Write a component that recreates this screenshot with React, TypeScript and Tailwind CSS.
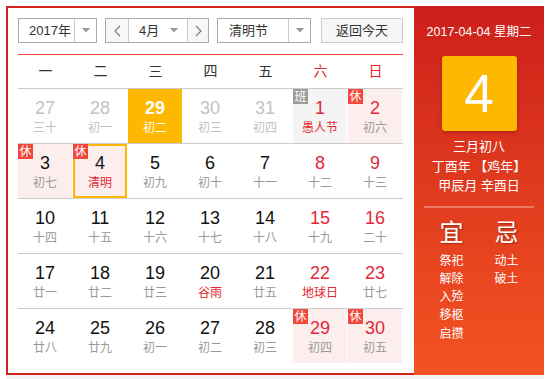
import * as React from "react";

type Day = {
  n: number;
  lunar: string;
  prev?: boolean;
  weekend?: boolean;
  fest?: boolean;
  badge?: "休" | "班";
  today?: boolean;
  selected?: boolean;
};

const WEEK = ["一", "二", "三", "四", "五", "六", "日"];

const ROWS: Day[][] = [
  [
    { n: 27, lunar: "三十", prev: true },
    { n: 28, lunar: "初一", prev: true },
    { n: 29, lunar: "初二", prev: true, today: true },
    { n: 30, lunar: "初三", prev: true },
    { n: 31, lunar: "初四", prev: true },
    { n: 1, lunar: "愚人节", weekend: true, fest: true, badge: "班" },
    { n: 2, lunar: "初六", weekend: true, badge: "休" },
  ],
  [
    { n: 3, lunar: "初七", badge: "休" },
    { n: 4, lunar: "清明", fest: true, badge: "休", selected: true },
    { n: 5, lunar: "初九" },
    { n: 6, lunar: "初十" },
    { n: 7, lunar: "十一" },
    { n: 8, lunar: "十二", weekend: true },
    { n: 9, lunar: "十三", weekend: true },
  ],
  [
    { n: 10, lunar: "十四" },
    { n: 11, lunar: "十五" },
    { n: 12, lunar: "十六" },
    { n: 13, lunar: "十七" },
    { n: 14, lunar: "十八" },
    { n: 15, lunar: "十九", weekend: true },
    { n: 16, lunar: "二十", weekend: true },
  ],
  [
    { n: 17, lunar: "廿一" },
    { n: 18, lunar: "廿二" },
    { n: 19, lunar: "廿三" },
    { n: 20, lunar: "谷雨", fest: true },
    { n: 21, lunar: "廿五" },
    { n: 22, lunar: "地球日", weekend: true, fest: true },
    { n: 23, lunar: "廿七", weekend: true },
  ],
  [
    { n: 24, lunar: "廿八" },
    { n: 25, lunar: "廿九" },
    { n: 26, lunar: "初一" },
    { n: 27, lunar: "初二" },
    { n: 28, lunar: "初三" },
    { n: 29, lunar: "初四", weekend: true, badge: "休" },
    { n: 30, lunar: "初五", weekend: true, badge: "休" },
  ],
];

const YI = ["祭祀", "解除", "入殓", "移柩", "启攒"];
const JI = ["动土", "破土"];

function Caret() {
  return (
    <svg width="8" height="5" viewBox="0 0 8 5" className="shrink-0">
      <path d="M0 0 L8 0 L4 4.5 Z" fill="#999" />
    </svg>
  );
}

function Chevron({ dir }: { dir: "left" | "right" }) {
  return (
    <svg width="7" height="12" viewBox="0 0 7 12">
      <path
        d={dir === "left" ? "M6 1 L1 6 L6 11" : "M1 1 L6 6 L1 11"}
        fill="none"
        stroke="#777"
        strokeWidth="1.1"
      />
    </svg>
  );
}

function Cell({ d }: { d: Day }) {
  const pink = d.badge === "休";
  const gray = d.badge === "班";
  let bg = "bg-white";
  if (d.today) bg = "bg-[#ffb800]";
  else if (pink) bg = "bg-[#fdeeee]";
  else if (gray) bg = "bg-[#f4f4f4]";

  let numColor = "text-[#111]";
  if (d.today) numColor = "text-white font-bold";
  else if (d.prev) numColor = "text-[#c2c2c2]";
  else if (d.weekend) numColor = "text-[#e3283a]";

  let lunarColor = "text-[#999]";
  if (d.today) lunarColor = "text-white";
  else if (d.prev) lunarColor = "text-[#c2c2c2]";
  else if (d.fest) lunarColor = "text-[#e3282d]";

  return (
    <div
      className={`relative flex h-[54px] w-[54px] flex-col items-center pt-[9px] ${bg} ${
        d.selected ? "ring-2 ring-inset ring-[#ffb800]" : ""
      }`}
    >
      {d.badge && (
        <span
          className={`absolute left-0 top-0 flex h-[15px] w-[15px] items-center justify-center text-[12px] leading-none text-white ${
            d.badge === "休" ? "bg-[#f3473c]" : "bg-[#9b9b9b]"
          }`}
        >
          {d.badge}
        </span>
      )}
      <span className={`text-[18px] leading-[20px] ${numColor}`}>{d.n}</span>
      <span className={`mt-[2px] text-[12px] leading-[16px] ${lunarColor}`}>{d.lunar}</span>
    </div>
  );
}

export default function App() {
  return (
    <div className="bg-white font-['Liberation_Sans','Noto_Sans_CJK_SC',sans-serif]">
      <div className="ml-[6px] flex h-[375px] w-[538px] flex-col pt-[6px]">
        <div className="flex h-[369px] w-[538px]">
          {/* calendar */}
          <div className="w-[408px] border-2 border-r-0 border-[#d3221b] pl-[10px] pr-[11px] pt-[10px]">
            <div className="flex h-[25px] items-stretch text-[13px] text-[#333]">
              <div className="flex w-[79px] border border-[#aaa]">
                <div className="flex w-[55px] items-center pl-[10px]">2017年</div>
                <div className="flex flex-1 items-center justify-center border-l border-[#ccc]">
                  <Caret />
                </div>
              </div>
              <div className="ml-[8px] flex w-[104px] border border-[#aaa]">
                <div className="flex w-[22px] items-center justify-center bg-[#f7f7f7]">
                  <Chevron dir="left" />
                </div>
                <div className="flex w-[60px] items-center justify-between border-x border-[#ccc] pl-[10px] pr-[9px]">
                  <span>4月</span>
                  <Caret />
                </div>
                <div className="flex flex-1 items-center justify-center bg-[#f7f7f7]">
                  <Chevron dir="right" />
                </div>
              </div>
              <div className="ml-[8px] flex w-[94px] border border-[#aaa]">
                <div className="flex w-[70px] items-center pl-[11px]">清明节</div>
                <div className="flex flex-1 items-center justify-center border-l border-[#ccc]">
                  <Caret />
                </div>
              </div>
              <div className="ml-[10px] flex w-[82px] items-center justify-center border border-[#ccc] bg-[#f6f6f6]">
                返回今天
              </div>
            </div>

            <div className="mt-[11px] h-px bg-[#f0463a]" />

            <div className="flex h-[33px] items-center">
              {WEEK.map((w, i) => (
                <div
                  key={w}
                  className={`w-[55px] text-center text-[14px] ${i >= 5 ? "text-[#e3282d]" : "text-[#333]"}`}
                >
                  {w}
                </div>
              ))}
            </div>

            <div className="border-t border-[#ccc]">
              {ROWS.map((row, ri) => (
                <div
                  key={ri}
                  className={`flex gap-px ${ri < ROWS.length - 1 ? "border-b border-[#ccc]" : ""}`}
                >
                  {row.map((d, ci) => (
                    <Cell key={ci} d={d} />
                  ))}
                </div>
              ))}
            </div>
          </div>

          {/* detail panel */}
          <div className="flex w-[130px] flex-col items-center bg-gradient-to-b from-[#cc1e1b] to-[#f45222] pt-[17px] text-white">
            <div className="text-[12.5px] leading-[18px]">2017-04-04 星期二</div>
            <div className="mt-[15px] flex h-[75px] w-[75px] items-center justify-center rounded-[3px] bg-[#ffb800] text-[53px] leading-none shadow-[0_2px_4px_rgba(120,0,0,0.35)]">
              4
            </div>
            <div className="mt-[6px] text-center text-[13px] leading-[19.5px]">
              <div>三月初八</div>
              <div>丁酉年 【鸡年】</div>
              <div>甲辰月 辛酉日</div>
            </div>
            <div className="mt-[10px] h-[2px] w-[110px] bg-white/30" />
            <div className="mt-[10px] flex gap-[31px]">
              <div className="w-[24px]">
                <div className="text-[24px] leading-[30px] [text-shadow:1px_1px_2px_rgba(0,0,0,0.35)]">宜</div>
                <div className="mt-[4px] text-[12px] leading-[18.3px]">
                  {YI.map((t) => (
                    <div key={t}>{t}</div>
                  ))}
                </div>
              </div>
              <div className="w-[24px]">
                <div className="text-[24px] leading-[30px] [text-shadow:1px_1px_2px_rgba(0,0,0,0.35)]">忌</div>
                <div className="mt-[4px] text-[12px] leading-[18.3px]">
                  {JI.map((t) => (
                    <div key={t}>{t}</div>
                  ))}
                </div>
              </div>
            </div>
          </div>
        </div>
      </div>
      <div className="ml-[6px] h-[4px] w-[538px] bg-[#f4f4f4]" />
    </div>
  );
}
